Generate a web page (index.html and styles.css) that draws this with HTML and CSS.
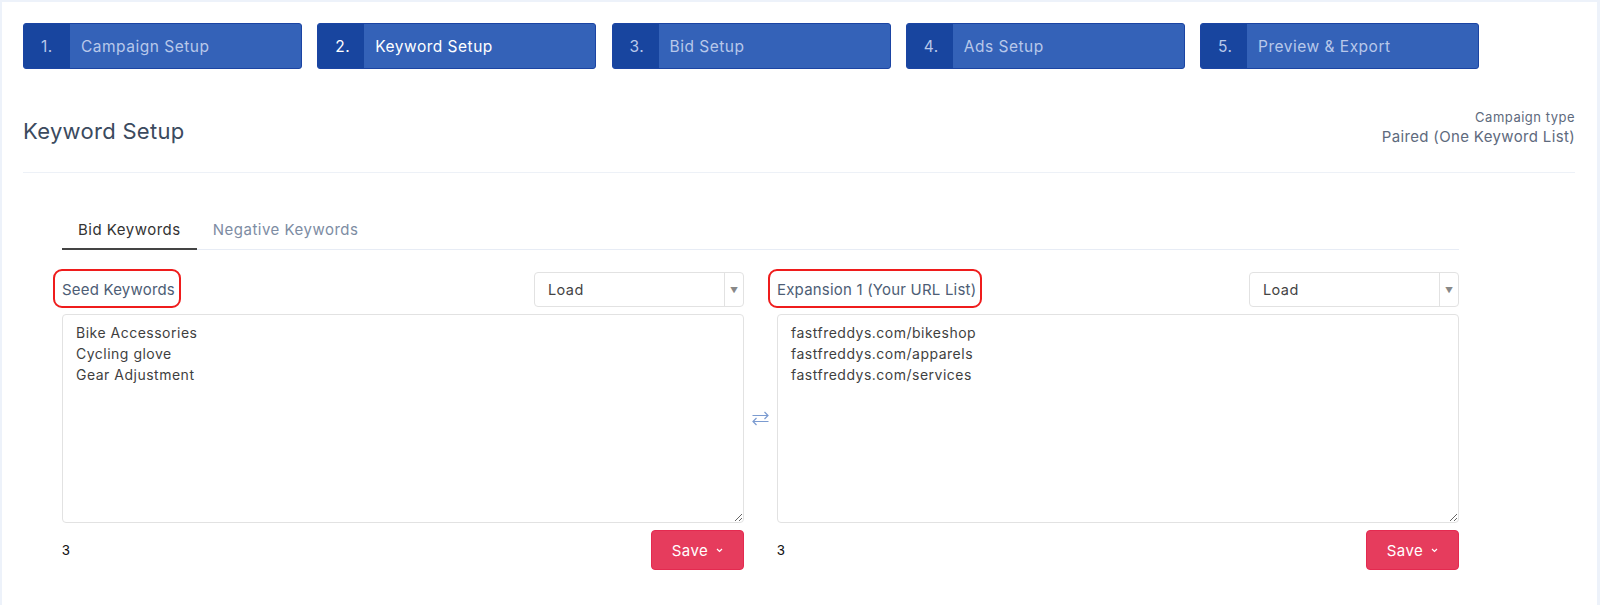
FILE: index.html
```html
<!DOCTYPE html>
<html lang="en">
<head>
    <meta charset="UTF-8">
    <meta name="viewport" content="width=device-width, initial-scale=1.0">
    <title>Keyword Setup</title>
    <link rel="stylesheet" href="styles.css">
</head>
<body>
    <div class="page">
        <div class="steps">
            <div class="step"><span class="step-num">1.</span><span class="step-label">Campaign Setup</span></div>
            <div class="step active"><span class="step-num">2.</span><span class="step-label">Keyword Setup</span></div>
            <div class="step"><span class="step-num">3.</span><span class="step-label">Bid Setup</span></div>
            <div class="step"><span class="step-num">4.</span><span class="step-label">Ads Setup</span></div>
            <div class="step"><span class="step-num">5.</span><span class="step-label">Preview &amp; Export</span></div>
        </div>

        <div class="header">
            <h1>Keyword Setup</h1>
            <div class="campaign-type">
                <div class="ct-label">Campaign type</div>
                <div class="ct-value">Paired (One Keyword List)</div>
            </div>
        </div>

        <div class="keywords">
            <div class="tabs">
                <div class="tab active">Bid Keywords</div>
                <div class="tab">Negative Keywords</div>
            </div>

            <div class="lists">
                <div class="list">
                    <div class="list-head">
                        <span class="list-title">Seed Keywords</span>
                        <div class="select">
                            <span class="select-value">Load</span>
                            <span class="select-arrow">&#9660;</span>
                        </div>
                    </div>
                    <textarea class="list-box">Bike Accessories
Cycling glove
Gear Adjustment</textarea>
                    <div class="list-foot">
                        <span class="count">3</span>
                        <button type="button" class="save-btn">Save
                            <svg width="7" height="5" viewBox="0 0 7 5"><path d="M1 1l2.5 2.5L6 1" fill="none" stroke="#fff" stroke-width="1.2"/></svg>
                        </button>
                    </div>
                </div>

                <div class="swap">
                    <svg width="19" height="15" viewBox="0 0 19 15">
                        <path d="M1.5 4.5H17M13.5 1L17 4.5L13.5 8" fill="none" stroke="#7b9bd0" stroke-width="1.2"/>
                        <path d="M17.5 10.5H2M5.5 7L2 10.5L5.5 14" fill="none" stroke="#7b9bd0" stroke-width="1.2"/>
                    </svg>
                </div>

                <div class="list">
                    <div class="list-head">
                        <span class="list-title">Expansion 1 (Your URL List)</span>
                        <div class="select">
                            <span class="select-value">Load</span>
                            <span class="select-arrow">&#9660;</span>
                        </div>
                    </div>
                    <textarea class="list-box">fastfreddys.com/bikeshop
fastfreddys.com/apparels
fastfreddys.com/services</textarea>
                    <div class="list-foot">
                        <span class="count">3</span>
                        <button type="button" class="save-btn">Save
                            <svg width="7" height="5" viewBox="0 0 7 5"><path d="M1 1l2.5 2.5L6 1" fill="none" stroke="#fff" stroke-width="1.2"/></svg>
                        </button>
                    </div>
                </div>
            </div>
        </div>
    </div>
</body>
</html>
```

FILE: styles.css
```css
body {
    font-family: Inter, "Open Sans", sans-serif;
    background-color: #edf2fa;
    margin: 0;
    padding: 0;
}
.page {
    background-color: #fff;
    margin: 2px 3px 0 2px;
    min-height: 603px;
    padding: 21px 22px 0 21px;
    box-sizing: border-box;
}
.steps {
    display: flex;
    gap: 15.25px;
}
.step {
    width: 279px;
    height: 46px;
    display: flex;
    background-color: #3462b8;
    border: 1px solid #1b44a3;
    border-radius: 3px;
    box-sizing: border-box;
    overflow: hidden;
    font-size: 15.5px;
    letter-spacing: 0.5px;
    color: #b8c8ea;
}
.step.active {
    color: #fff;
}
.step-num {
    width: 46px;
    flex-shrink: 0;
    background-color: #18459f;
    padding-left: 17px;
    box-sizing: border-box;
    display: flex;
    align-items: center;
}
.step-label {
    padding-left: 11px;
    display: flex;
    align-items: center;
}
.header {
    margin-top: 39px;
    display: flex;
    justify-content: space-between;
    align-items: flex-end;
    padding-bottom: 24px;
    border-bottom: 1px solid #edf1f7;
}
.header h1 {
    margin: 0 0 2px 0;
    font-size: 22px;
    font-weight: 400;
    line-height: 30px;
    letter-spacing: 0.3px;
    color: #3b4a5e;
}
.campaign-type {
    text-align: right;
    color: #5e6a7d;
}
.ct-label {
    font-size: 13px;
    line-height: 18px;
    letter-spacing: 0.5px;
}
.ct-value {
    font-size: 15px;
    line-height: 22px;
    letter-spacing: 0.35px;
}
.keywords {
    margin: 38px 0 0 39px;
    width: 1397px;
}
.tabs {
    display: flex;
    border-bottom: 1px solid #e7ecf5;
}
.tab {
    padding: 9px 16px 8px;
    line-height: 20px;
    font-size: 15px;
    letter-spacing: 0.5px;
    color: #7d8ca3;
    margin-bottom: -1px;
    border-bottom: 2px solid transparent;
}
.tab.active {
    color: #333;
    border-bottom-color: #444;
}
.lists {
    display: flex;
    margin-top: 22px;
}
.list {
    width: 682px;
}
.swap {
    width: 33px;
    margin-top: 42px;
    height: 209px;
    display: flex;
    align-items: center;
    justify-content: center;
}
.list-head {
    display: flex;
    justify-content: space-between;
    align-items: center;
    height: 35px;
    margin-bottom: 7px;
}
.list-title {
    position: relative;
    font-size: 15px;
    line-height: 20px;
    letter-spacing: 0.2px;
    color: #4d5d75;
}
.list-title::after {
    content: "";
    position: absolute;
    left: -9px;
    right: -6px;
    top: -11px;
    bottom: -8px;
    border: 2px solid #ef1c1c;
    border-radius: 9px;
}
.select {
    width: 210px;
    height: 35px;
    box-sizing: border-box;
    border: 1px solid #e2e2e2;
    border-radius: 4px;
    display: flex;
}
.select-value {
    flex: 1;
    padding-left: 13px;
    font-size: 14.5px;
    line-height: 33px;
    letter-spacing: 0.4px;
    color: #444;
}
.select-arrow {
    width: 18px;
    border-left: 1px solid #e2e2e2;
    display: flex;
    align-items: center;
    justify-content: center;
    font-size: 8px;
    color: #888;
}
.list-box {
    display: block;
    width: 100%;
    height: 209px;
    box-sizing: border-box;
    border: 1px solid #e2e2e2;
    border-radius: 4px;
    padding: 7px 13px;
    font-family: Inter, "Open Sans", sans-serif;
    font-size: 14px;
    line-height: 21px;
    letter-spacing: 0.5px;
    color: #3f3f3f;
    resize: vertical;
    outline: none;
}
.list-foot {
    display: flex;
    justify-content: space-between;
    align-items: center;
    margin-top: 7px;
}
.count {
    font-family: "Liberation Sans", Arial, sans-serif;
    font-size: 14px;
    color: #111;
}
.save-btn {
    width: 93px;
    height: 40px;
    background-color: #e63c5d;
    border: 1px solid #e42a50;
    border-radius: 4px;
    color: #fff;
    font-family: Inter, "Open Sans", sans-serif;
    font-size: 15px;
    letter-spacing: 0.4px;
    display: flex;
    align-items: center;
    justify-content: center;
    gap: 8px;
    cursor: pointer;
}
```
